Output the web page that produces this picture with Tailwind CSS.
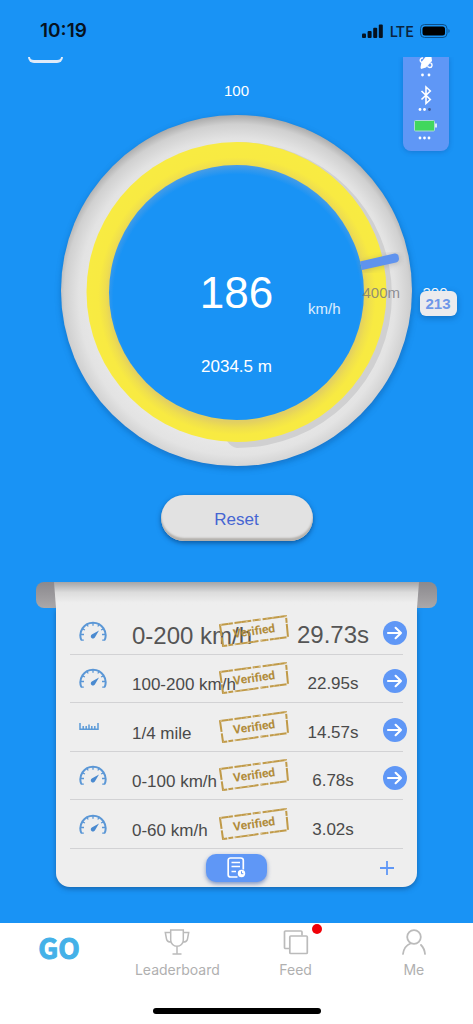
<!DOCTYPE html>
<html lang="en">
<head>
<meta charset="utf-8">
<meta name="viewport" content="width=device-width, initial-scale=1">
<title>Speed meter</title>
<script src="https://cdn.jsdelivr.net/npm/@tailwindcss/browser@4"></script>
</head>
<body class="flex min-h-screen flex-col bg-[#1993f5] font-['Liberation_Sans',Arial,sans-serif]">

<svg class="hidden" aria-hidden="true">
  <defs>
    <symbol id="gauge" viewBox="0 0 28 22">
      <path d="M2.400 20.200A12.600 12.600 0 1 1 25.600 20.200" fill="none" stroke="#5b97d6" stroke-width="2"/>
      <path d="M2 14.500h3M3.600 8.800l2.300 1.200M8 4.500l1.200 2M14 2.800v3M20 4.500l-1.200 2M24.400 8.800l-2.300 1.200M26 14.500h-3M2 20.200h2.800M26 20.200h-2.800" stroke="#5b97d6" stroke-width="1.300"/>
      <path d="M20 10.500L16 17.200A2.200 2.200 0 1 1 12.800 14.500Z" fill="#4a8ad0"/>
    </symbol>
    <symbol id="ruler" viewBox="0 0 20 8">
      <path d="M1 0v6.200h18V0M4.200 6V3M7.200 6V3M10 6V1.600M12.800 6V3M15.800 6V3" fill="none" stroke="#5b9ad8" stroke-width="1.500"/>
    </symbol>
    <symbol id="arrow" viewBox="0 0 24 24">
      <circle cx="12" cy="12" r="12" fill="#5f97f6"/>
      <path d="M5 12h13M12.600 6.800L18 12l-5.400 5.200" fill="none" stroke="#fff" stroke-width="2.100" stroke-linecap="round" stroke-linejoin="round"/>
    </symbol>
    <symbol id="stamp" viewBox="0 0 72 34">
      <g fill="none">
        <path d="M2 11L68 2L70 23L5 32Z" stroke="#c09a48" stroke-width="2" stroke-linejoin="round" stroke-dasharray="13 1.500 17 1.500 8 2 24 1.500 5 1"/>
        <path d="M2 11L68 2M70 23L5 32" stroke="#efe3c4" stroke-width="0.600" stroke-dasharray="2 6 1 4"/>
      </g>
    </symbol>
  </defs>
</svg>

<header class="flex h-[57px] shrink-0 items-center justify-between pt-1 pr-[22px] pl-10 font-['Inter',sans-serif] text-[#06121f]">
  <time class="text-[19px] leading-6 font-semibold">10:19</time>
  <div class="flex items-center gap-[6px]">
    <svg class="h-[14px] w-[21px]" viewBox="0 0 21 14" fill="currentColor" aria-label="Signal"><rect y="9.500" width="4" height="4.500" rx="1"/><rect x="5.600" y="7" width="4" height="7" rx="1"/><rect x="11.200" y="3.800" width="4" height="10.200" rx="1"/><rect x="16.800" y="0.500" width="4" height="13.500" rx="1"/></svg>
    <span class="font-['Noto_Sans_CJK_SC',sans-serif] text-[15px] leading-5 font-medium text-[#0a2440]">LTE</span>
    <svg class="h-[14px] w-[31px]" viewBox="0 0 31 14" aria-label="Battery"><rect x="0.500" y="0.500" width="26.500" height="13" rx="4" fill="none" stroke="#0d4f88"/><rect x="2.500" y="2.500" width="22.500" height="9" rx="2.500" fill="#000"/><path d="M28.500 5v4a2.400 2.400 0 0 0 0-4" fill="#0d4f88"/></svg>
  </div>
</header>

<main class="relative flex grow flex-col items-center overflow-hidden pb-9">
  <button type="button" aria-label="Menu" class="absolute top-0 left-7 h-[6px] w-[35px] rounded-b-md border-x-2 border-b-3 border-[#dfeaf8]"></button>

  <aside aria-label="Device status" class="absolute top-0 right-6 flex h-[94px] w-[46px] flex-col items-center rounded-b-lg bg-[#5f97f6] shadow-[0_1px_5px_rgba(20,60,140,0.3)]">
    <svg class="h-[94px] w-[46px]" viewBox="0 0 46 94">
      <path d="M22.500 0H28.500L29 4L23 10.500L18 12L17.500 10.500L18.500 5Z" fill="#fff"/>
      <path d="M20 1a2.300 2.300 0 1 0 0 4.500M24.500 8.500a2.300 2.300 0 1 0 3-2.500" fill="none" stroke="#fff" stroke-width="1.400"/>
      <g fill="#fff"><circle cx="19.500" cy="18" r="1.400"/><circle cx="26" cy="18" r="1.400"/><circle cx="17" cy="52.500" r="1.400"/><circle cx="21.500" cy="52.500" r="1.400"/><circle cx="17" cy="81" r="1.400"/><circle cx="21.500" cy="81" r="1.400"/><circle cx="26" cy="81" r="1.400"/></g>
      <circle cx="26.500" cy="52.500" r="1.400" fill="#42609f"/>
      <path d="M18.500 34L27.300 42.500L23 46.500V30L27.300 34L18.500 42.500" fill="none" stroke="#fff" stroke-width="1.600"/>
      <rect x="11.500" y="63.500" width="20" height="10.500" rx="1" fill="#41d75d" stroke="#a9d9d8"/>
      <path d="M32 66.500h2v4h-2z" fill="#d7eef5"/>
    </svg>
  </aside>

  <p class="mt-6 text-[15px] leading-5 text-white">100</p>

  <section aria-label="Speed" class="relative mt-[14px] h-[352px] w-[352px]">
    <svg class="h-full w-full overflow-visible" viewBox="0 0 352 352">
      <defs>
        <radialGradient id="rim" gradientUnits="userSpaceOnUse" cx="176" cy="182" r="182">
          <stop offset="0.780" stop-color="#e8e8e8"/><stop offset="0.870" stop-color="#e3e3e3"/><stop offset="0.950" stop-color="#d0d0d0"/><stop offset="1" stop-color="#aaa"/>
        </radialGradient>
        <radialGradient id="yellow" gradientUnits="userSpaceOnUse" cx="176" cy="181" r="150">
          <stop offset="0.840" stop-color="#e2cf62"/><stop offset="0.880" stop-color="#efdf4e"/><stop offset="0.925" stop-color="#f8ea42"/><stop offset="1" stop-color="#f8eb42"/>
        </radialGradient>
        <radialGradient id="hub" gradientUnits="userSpaceOnUse" cx="176" cy="183" r="133">
          <stop offset="0.930" stop-color="#1993f5"/><stop offset="1" stop-color="#4a9de6"/>
        </radialGradient>
        <filter id="soft" x="-10%" y="-10%" width="120%" height="120%"><feGaussianBlur stdDeviation="3"/></filter>
      </defs>
      <circle cx="176" cy="178" r="176" fill="#0c4f95" opacity="0.450" filter="url(#soft)"/>
      <circle cx="175.500" cy="175.500" r="175.500" fill="url(#rim)"/>
      <path d="M176 27A155 153 0 0 1 176 333Q170 332 166 326Z" fill="#d0d0d1"/>
      <circle cx="175.500" cy="177" r="150" fill="url(#yellow)"/>
      <circle cx="175.500" cy="177.500" r="127.500" fill="url(#hub)"/>
      <path d="M300 147.500L333.500 139.500A4.500 4.500 0 0 1 338 146.500L336 148L302 156Z" fill="#777" opacity="0.400" filter="url(#soft)"/>
      <path d="M299 146.500L333.500 138.500Q337 138 337.500 141L338 143.500Q338 146.500 335 147.500L301 155Z" fill="#5f93ee"/>
    </svg>
    <div class="absolute inset-0 flex flex-col items-center pt-[154px] text-white">
      <output class="text-[44px] leading-[48px]">186</output>
      <span class="mr-6 -mt-4 self-end pr-12 text-[15px] leading-4 text-white/85">km/h</span>
      <span class="mt-10 text-[17px] leading-5">2034.5 m</span>
    </div>
    <span class="absolute top-[168px] left-[302px] text-[15px] leading-5 text-[#77777d]/80">400m</span>
    <span class="absolute top-[168px] left-[362px] text-[15px] leading-5 text-white">200</span>
    <span class="absolute top-[176px] left-[359px] rounded-md bg-[#ebebee] px-[6px] text-[15px] leading-[25px] font-bold text-[#6e97e8] shadow-[0_2px_6px_rgba(10,60,120,0.4)]">213</span>
  </section>

  <button type="button" class="mt-7 h-[46px] w-[152px] rounded-full bg-[#e2e2e2] pt-1 text-[17px] leading-5 text-[#4565d2] shadow-[inset_0_-3px_2px_#b3b0ac,0_2px_5px_rgba(0,40,90,0.55)]">Reset</button>

  <section aria-label="Results" class="mt-[41px] self-stretch px-9">
    <div class="h-[26px] rounded-lg bg-linear-to-b from-[#8b898d] to-[#aaa8aa] px-[18px]">
      <div class="h-full bg-linear-to-b from-[#a5a5a7] via-[#dcdcdc] via-40% to-[#eee] to-80% [clip-path:polygon(0_0,100%_0,calc(100%-2px)_100%,2px_100%)]"></div>
    </div>
    <div class="mx-5 rounded-b-[14px] bg-[#eee] px-[14px] text-[#4a4a4a] shadow-[0_2px_5px_rgba(20,60,110,0.5)]">
      <table class="w-full table-fixed border-collapse text-[17px] leading-5 whitespace-nowrap">
        <colgroup><col class="w-[62px]"><col class="w-[86px]"><col><col class="w-[88px]"><col class="w-[26px]"></colgroup>
        <tbody>
          <tr class="h-[46px] border-b border-[#d2d2d4]">
            <td class="pl-[9px]"><svg class="h-[22px] w-7"><use href="#gauge"/></svg></td>
            <th scope="row" class="pt-[10px] text-left text-2xl leading-8 font-normal text-[#555]">0-200 km/h</th>
            <td><div class="relative -my-1 grid h-[34px] w-[72px] place-items-center"><svg class="absolute inset-0 h-[34px] w-[72px]"><use href="#stamp"/></svg><span class="-rotate-8 font-['Roboto',sans-serif] text-xs leading-4 font-bold text-[#b18c3c]">Verified</span></div></td>
            <td class="pt-2 text-center text-2xl leading-8 text-[#555]">29.73s</td>
            <td class="pt-1 pl-[6px]"><button type="button" aria-label="Open 0-200 km/h" class="block h-6 w-6"><svg class="h-6 w-6"><use href="#arrow"/></svg></button></td>
          </tr>
          <tr class="h-[48px] border-b border-[#d2d2d4]">
            <td class="pl-[9px]"><svg class="h-[22px] w-7"><use href="#gauge"/></svg></td>
            <th scope="row" class="pt-[14px] text-left font-normal">100-200 km/h</th>
            <td><div class="relative grid h-[34px] w-[72px] place-items-center"><svg class="absolute inset-0 h-[34px] w-[72px]"><use href="#stamp"/></svg><span class="-rotate-8 font-['Roboto',sans-serif] text-xs leading-4 font-bold text-[#b18c3c]">Verified</span></div></td>
            <td class="pt-3 text-center">22.95s</td>
            <td class="pt-[6px] pl-[6px]"><button type="button" aria-label="Open 100-200 km/h" class="block h-6 w-6"><svg class="h-6 w-6"><use href="#arrow"/></svg></button></td>
          </tr>
          <tr class="h-[49px] border-b border-[#d2d2d4]">
            <td class="pl-[9px]"><svg class="h-2 w-5"><use href="#ruler"/></svg></td>
            <th scope="row" class="pt-[14px] text-left font-normal">1/4 mile</th>
            <td><div class="relative grid h-[34px] w-[72px] place-items-center"><svg class="absolute inset-0 h-[34px] w-[72px]"><use href="#stamp"/></svg><span class="-rotate-8 font-['Roboto',sans-serif] text-xs leading-4 font-bold text-[#b18c3c]">Verified</span></div></td>
            <td class="pt-3 text-center">14.57s</td>
            <td class="pt-[6px] pl-[6px]"><button type="button" aria-label="Open 1/4 mile" class="block h-6 w-6"><svg class="h-6 w-6"><use href="#arrow"/></svg></button></td>
          </tr>
          <tr class="h-[48px] border-b border-[#d2d2d4]">
            <td class="pl-[9px]"><svg class="h-[22px] w-7"><use href="#gauge"/></svg></td>
            <th scope="row" class="pt-[14px] text-left font-normal">0-100 km/h</th>
            <td><div class="relative grid h-[34px] w-[72px] place-items-center"><svg class="absolute inset-0 h-[34px] w-[72px]"><use href="#stamp"/></svg><span class="-rotate-8 font-['Roboto',sans-serif] text-xs leading-4 font-bold text-[#b18c3c]">Verified</span></div></td>
            <td class="pt-3 text-center">6.78s</td>
            <td class="pt-[6px] pl-[6px]"><button type="button" aria-label="Open 0-100 km/h" class="block h-6 w-6"><svg class="h-6 w-6"><use href="#arrow"/></svg></button></td>
          </tr>
          <tr class="h-[49px] border-b border-[#d2d2d4]">
            <td class="pl-[9px]"><svg class="h-[22px] w-7"><use href="#gauge"/></svg></td>
            <th scope="row" class="pt-[14px] text-left font-normal">0-60 km/h</th>
            <td><div class="relative grid h-[34px] w-[72px] place-items-center"><svg class="absolute inset-0 h-[34px] w-[72px]"><use href="#stamp"/></svg><span class="-rotate-8 font-['Roboto',sans-serif] text-xs leading-4 font-bold text-[#b18c3c]">Verified</span></div></td>
            <td class="pt-3 text-center">3.02s</td>
            <td></td>
          </tr>
        </tbody>
      </table>
      <div class="grid h-[38px] grid-cols-3 items-center">
        <button type="button" aria-label="History" class="col-start-2 grid h-7 w-[61px] place-items-center justify-self-center rounded-[10px] bg-[#5f97f6] shadow-[0_2px_4px_rgba(50,90,170,0.6)]">
          <svg class="h-[21px] w-[19px]" viewBox="0 0 19 21" fill="none" stroke="#fff"><path d="M10.500 20H3.500A2.300 2.300 0 0 1 1.200 17.700V3.300A2.300 2.300 0 0 1 3.500 1H14A2.300 2.300 0 0 1 16.300 3.300V12.500" stroke-width="1.700"/><path d="M4.500 5.500h8.500M4.500 9.500h8.500M4.500 14.500h4.500" stroke-width="1.600"/><circle cx="14.500" cy="16.500" r="3.700" fill="#fff" stroke="none"/><path d="M14.500 14.300v2.400h1.800" stroke="#5f97f6"/></svg>
        </button>
        <button type="button" aria-label="Add" class="mr-[9px] h-[14px] w-[14px] justify-self-end"><svg class="h-[14px] w-[14px]" viewBox="0 0 14 14"><path d="M7 0v14M0 7h14" stroke="#5f97f6" stroke-width="1.800"/></svg></button>
      </div>
    </div>
  </section>
</main>

<footer class="flex h-[101px] shrink-0 flex-col justify-between bg-white pb-[10px] font-['Inter',sans-serif]">
  <nav aria-label="Main" class="grid grid-cols-4 text-center text-[14px] leading-5 text-[#b0b0b0]">
    <a href="#go" class="pt-2 font-['Noto_Sans_CJK_SC',sans-serif] text-[28px] leading-8 font-bold text-[#44b1e8] [-webkit-text-stroke:1px_#44b1e8]">GO</a>
    <a href="#leaderboard" class="flex flex-col items-center gap-[5px] pt-[6px]">
      <svg class="h-[26px] w-[26px]" viewBox="0 0 26 26" fill="none" stroke="#bbb" stroke-width="1.500"><path d="M6.700 1h12.600v10a6.300 6.300 0 0 1-12.600 0zM6.700 3.500H1.300L2.500 10Q3 13 7 13M19.300 3.500h5.400L23.500 10Q23 13 19 13M13 17.500V25M8.500 25h9"/></svg>
      Leaderboard</a>
    <a href="#feed" class="relative flex flex-col items-center gap-[5px] pt-[6px]">
      <svg class="h-[26px] w-[26px]" viewBox="0 0 26 26" fill="none" stroke="#bbb" stroke-width="1.700"><rect x="6.800" y="7" width="17.500" height="17.500" rx="1"/><path d="M6.500 19.500H2.500A1 1 0 0 1 1.500 18.500V3A1 1 0 0 1 2.500 2H18A1 1 0 0 1 19 3V6.500"/></svg>
      Feed
      <span class="absolute top-[1px] left-[calc(50%+16px)] h-[10px] w-[10px] rounded-full bg-[#f00008]"></span></a>
    <a href="#me" class="flex flex-col items-center gap-[5px] pt-[6px]">
      <svg class="h-[26px] w-[26px]" viewBox="0 0 26 26" fill="none" stroke="#bbb" stroke-width="1.800" stroke-linecap="round"><circle cx="13" cy="8" r="6.800"/><path d="M2 25Q3 17 9.500 14.500M20 16Q23.500 19.500 24 25"/></svg>
      Me</a>
  </nav>
  <div class="mx-auto h-[6px] w-[168px] rounded-full bg-black"></div>
</footer>
</body>
</html>
